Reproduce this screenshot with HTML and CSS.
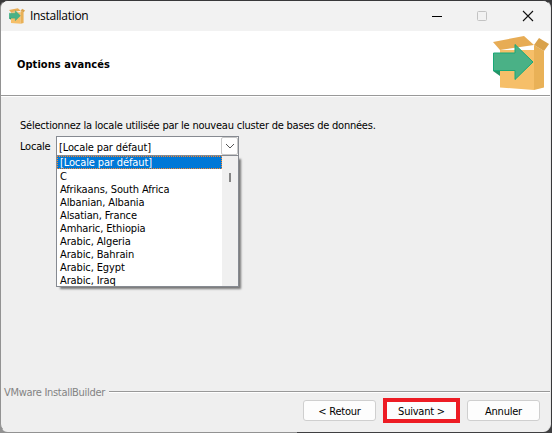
FILE: index.html
```
<!DOCTYPE html>
<html lang="fr">
<head>
<meta charset="utf-8">
<title>Installation</title>
<link rel="stylesheet" href="styles.css">
</head>
<body>
<svg width="0" height="0" class="defs" aria-hidden="true">
  <symbol id="package" viewBox="0 0 56 54">
    <path d="M7 14H41V54L7 51.5Z" fill="#f6bf69"/>
    <path d="M0 6 31 0 41 9 7 14Z" fill="#e7ac55"/>
    <path d="M41 9 51 15V51.5L41 54Z" fill="#e9b157"/>
    <path d="M41 9 46 2 56 8 51 15Z" fill="#d9a24c"/>
    <path d="M0 34 7 34V40L0 35Z" fill="#239467"/>
    <path d="M.5 17H22V8.5L40 26 22 43.5V34.5H.5Z" fill="#4ab186" stroke="#19a878"/>
  </symbol>
</svg>
<main class="window">
  <div class="titlebar">
    <svg class="app-icon"><use href="#package"/></svg>
    <span class="title">Installation</span>
    <svg class="controls" viewBox="0 0 110 12">
      <path d="M0 6.5H10" stroke="#000"/>
      <rect x="45.5" y="1.5" width="9" height="9" rx="1" fill="none" stroke="#c3c3c3"/>
      <path d="M91 1 101 11M101 1 91 11" stroke="#111" stroke-width="1.1"/>
    </svg>
  </div>
  <header class="header">
    <h1>Options avancés</h1>
    <svg class="package"><use href="#package"/></svg>
  </header>
  <section class="content">
    <p class="prompt">Sélectionnez la locale utilisée par le nouveau cluster de bases de données.</p>
    <div class="field">
      <label>Locale</label>
      <div class="combo">
        <span class="value">[Locale par défaut]</span>
        <span class="drop"><svg viewBox="0 0 10 6"><path d="M1 1 5 5 9 1" fill="none" stroke="#555"/></svg></span>
        <div class="popup">
          <ul>
            <li class="selected">[Locale par défaut]</li>
            <li>C</li>
            <li>Afrikaans, South Africa</li>
            <li>Albanian, Albania</li>
            <li>Alsatian, France</li>
            <li>Amharic, Ethiopia</li>
            <li>Arabic, Algeria</li>
            <li>Arabic, Bahrain</li>
            <li>Arabic, Egypt</li>
            <li>Arabic, Iraq</li>
          </ul>
          <div class="scrollbar"><i></i></div>
        </div>
      </div>
    </div>
  </section>
  <div class="divider"><span>VMware InstallBuilder</span><i></i></div>
  <footer class="footer">
    <button class="back">&lt; Retour</button>
    <span class="highlight"><button class="next">Suivant &gt;</button></span>
    <button class="cancel">Annuler</button>
  </footer>
</main>
</body>
</html>
```
FILE: styles.css
```
* { box-sizing: border-box; }
html { min-height: 100%; background: linear-gradient(90deg, #929292 297px, #3f3f41 297px) bottom / 100% 10px no-repeat #38383a; }
body { margin: 0; font: 11px/13px "DejaVu Sans Condensed", "DejaVu Sans", sans-serif; font-stretch: condensed; color: #000; letter-spacing: -0.22px; white-space: nowrap; }
.defs { position: absolute; }
.window { width: 551px; height: 432px; display: flex; flex-direction: column; background: #efefef; border: 1px solid #929292; border-top-color: #38383a; border-right-color: #e6e6e6; border-bottom-color: #efefef; border-radius: 8px; overflow: hidden; }
.titlebar { height: 30px; display: flex; align-items: center; background: #f2f2f2; padding-left: 8px; flex: none; }
.app-icon { width: 16px; height: 16px; }
.title { font: 12px/16px "Open Sans", sans-serif; letter-spacing: -0.3px; margin-left: 5px; }
.controls { width: 110px; height: 12px; margin-left: auto; margin-right: 8px; }
.header { height: 66px; flex: none; display: flex; align-items: flex-start; justify-content: space-between; background: #fff; border-bottom: 1px solid #fff; box-shadow: inset 0 -1px #999; padding: 5px 1px 0 16px; }
h1 { font-size: 11px; line-height: 13px; margin: 22px 0 0; letter-spacing: 0.06px; }
.package { width: 56px; height: 54px; }
.content { height: 288px; flex: none; padding: 22px 0 0 19px; }
.prompt { margin: 0; }
.field { display: flex; margin-top: 4px; }
label { width: 36px; padding-top: 4px; }
.combo { position: relative; width: 183px; height: 20px; display: flex; background: #fff; border: 1px solid #868a91; letter-spacing: -0.12px; }
.value { flex: 1; padding: 4px 0 0 2px; }
.drop { width: 17px; border: 1px solid #c8c8c8; border-radius: 2px; display: grid; place-items: center; }
.drop svg { width: 10px; height: 6px; }
.popup { position: absolute; left: -1px; top: 18px; width: 183px; height: 132px; display: flex; background: #fff; border: 1px solid #868a91; box-shadow: 3px 3px 2px -1px #777; }
ul { list-style: none; margin: 0; padding: 0; width: 165px; }
li { height: 13px; line-height: 15px; padding-left: 3px; }
.selected { background: #0078d7; color: #fff; line-height: 14px; outline: 1px dotted #ff8728; outline-offset: -1px; }
.scrollbar { flex: 1; background: #f0f0f0; padding: 17px 0 0 7px; }
.scrollbar i { display: block; width: 2px; height: 9px; background: #858585; }
.divider { height: 14px; flex: none; display: flex; align-items: center; color: #838383; padding-left: 3px; letter-spacing: -0.3px; }
.divider span { padding-top: 1px; }
.divider i { flex: 1; height: 2px; margin-left: 4px; background: #999; border-bottom: 1px solid #fff; }
.footer { display: flex; justify-content: flex-end; align-items: flex-start; padding: 1px 10px 0 0; }
button { font: inherit; letter-spacing: inherit; color: #000; width: 73px; height: 21px; padding: 1px 0 0; background: #fdfdfd; border: 1px solid #cfcfcf; border-radius: 3px; }
.highlight { border: 4px solid #ed1c24; width: 77px; height: 25px; margin: -2px 7px 0; display: flex; }
.next { width: 69px; height: 17px; border: 0; border-radius: 0; }
```
